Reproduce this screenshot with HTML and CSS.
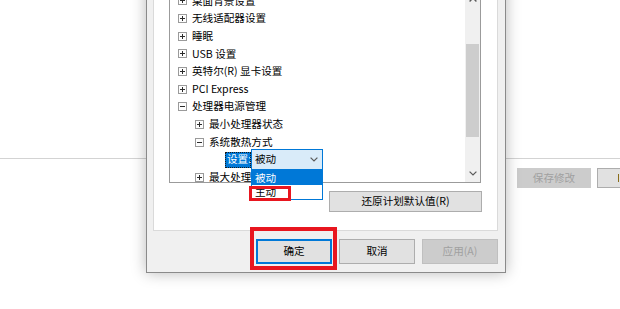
FILE: index.html
```html
<!DOCTYPE html>
<html lang="zh-CN">
<head>
<meta charset="utf-8">
<title>电源选项 - 高级设置</title>
<link rel="stylesheet" href="styles.css">
</head>
<body>
<svg class="defs" width="0" height="0" aria-hidden="true">
  <symbol id="plus" viewBox="0 0 9 9">
    <rect x="0.5" y="0.5" width="8" height="8" fill="#fdfdfd" stroke="#9a9a9a"/>
    <path d="M2 4.5h5M4.5 2v5" stroke="#2b2b2b" fill="none"/>
  </symbol>
  <symbol id="minus" viewBox="0 0 9 9">
    <rect x="0.5" y="0.5" width="8" height="8" fill="#fdfdfd" stroke="#9a9a9a"/>
    <path d="M2 4.5h5" stroke="#2b2b2b" fill="none"/>
  </symbol>
  <symbol id="chev-down" viewBox="0 0 8 5">
    <path d="M0.6 0.6L4 4L7.4 0.6" stroke="#5a5a5a" stroke-width="1.2" fill="none"/>
  </symbol>
  <symbol id="chev-up" viewBox="0 0 8 5">
    <path d="M0.6 4.4L4 1L7.4 4.4" stroke="#5a5a5a" stroke-width="1.4" fill="none"/>
  </symbol>
</svg>

<div class="page">
  <div class="page-band"></div>
  <div class="page-actions">
    <button class="pbtn pbtn-disabled">保存修改</button>
    <button class="pbtn pbtn-cut" aria-label="取消"><span class="cut-mark"></span></button>
  </div>
</div>

<div class="dialog">
  <div class="panel">
    <div class="tree">
      <ul class="tree-list">
        <li class="row l1"><svg class="exp"><use href="#plus"/></svg><span>桌面背景设置</span></li>
        <li class="row l1"><svg class="exp"><use href="#plus"/></svg><span>无线适配器设置</span></li>
        <li class="row l1"><svg class="exp"><use href="#plus"/></svg><span>睡眠</span></li>
        <li class="row l1"><svg class="exp"><use href="#plus"/></svg><span>USB 设置</span></li>
        <li class="row l1"><svg class="exp"><use href="#plus"/></svg><span>英特尔(R) 显卡设置</span></li>
        <li class="row l1"><svg class="exp"><use href="#plus"/></svg><span>PCI Express</span></li>
        <li class="row l1"><svg class="exp"><use href="#minus"/></svg><span>处理器电源管理</span></li>
        <li class="row l2"><svg class="exp"><use href="#plus"/></svg><span>最小处理器状态</span></li>
        <li class="row l2"><svg class="exp"><use href="#minus"/></svg><span>系统散热方式</span></li>
        <li class="row l3"><span class="combo-label">设置:</span><span class="combo"><span>被动</span><svg class="combo-chev"><use href="#chev-down"/></svg></span></li>
        <li class="row l2"><svg class="exp"><use href="#plus"/></svg><span>最大处理器状态</span></li>
      </ul>
      <div class="scrollbar">
        <div class="sb-btn"><svg class="sb-arrow"><use href="#chev-up"/></svg></div>
        <div class="sb-track"><div class="sb-thumb"></div></div>
        <div class="sb-btn"><svg class="sb-arrow"><use href="#chev-down"/></svg></div>
      </div>
    </div>
    <div class="restore-row">
      <button class="btn restore">还原计划默认值(R)</button>
    </div>
  </div>
  <div class="actions">
    <button class="btn btn-primary">确定</button>
    <button class="btn">取消</button>
    <button class="btn btn-disabled">应用(A)</button>
  </div>
  <ul class="combo-list">
    <li class="opt opt-sel">被动</li>
    <li class="opt">主动</li>
  </ul>
</div>

<div class="mark mark-option"></div>
<div class="mark mark-ok"></div>
</body>
</html>
```

FILE: styles.css
```css
* {
  box-sizing: border-box;
  margin: 0;
  padding: 0;
}

html,
body {
  width: 620px;
  height: 309px;
  overflow: hidden;
}

body {
  position: relative;
  background: #ffffff;
  color: #000000;
  font-family: "Noto Sans CJK SC", "Noto Sans", sans-serif;
  font-size: 10.6px;
  line-height: 1;
}

.defs {
  position: absolute;
  width: 0;
  height: 0;
}

/* background page */
.page-band {
  height: 159px;
  border-bottom: 1px solid #d3d3d3;
}

.page-actions {
  display: flex;
  gap: 6px;
  padding: 9px 0 0 517px;
  white-space: nowrap;
}

.pbtn {
  flex: none;
  width: 74px;
  height: 20px;
  border: 1px solid #adadad;
  background: #e1e1e1;
  color: #000;
  font: inherit;
}

.pbtn-disabled {
  background: #cccccc;
  border-color: #cccccc;
  color: #a0a0a0;
}

.pbtn-cut {
  display: flex;
  justify-content: flex-end;
  align-items: center;
  width: 23px;
  border-right-width: 0;
  padding-right: 1px;
}

.cut-mark {
  width: 1px;
  height: 8px;
  background: #8a6d1a;
}

/* dialog window */
.dialog {
  position: absolute;
  left: 146px;
  top: -30px;
  width: 360px;
  background: #f0f0f0;
  border: 1px solid #8a8a8a;
  padding: 0 7px 8px 6px;
  box-shadow: 0 0 14px rgba(0, 0, 0, 0.28);
}

.panel {
  margin-top: 10px;
  background: #ffffff;
  border: 1px solid #dadada;
  padding: 8px 0 18px 15px;
}

.tree {
  display: flex;
  width: 312px;
  height: 193px;
  border: 1px solid #9b9b9b;
  overflow: hidden;
  background: #fff;
}

.tree-list {
  flex: 1;
  list-style: none;
  padding-top: 1px;
  overflow: hidden;
}

.row {
  display: flex;
  align-items: center;
  gap: 5px;
  height: 17.67px;
  white-space: nowrap;
}

.l1 { padding-left: 8px; }
.l2 { padding-left: 25px; }
.l3 { padding-left: 55px; gap: 0; }

.exp {
  flex: none;
  width: 9px;
  height: 9px;
}

.combo-label {
  flex: none;
  display: flex;
  align-items: center;
  width: 26px;
  height: 16px;
  padding-left: 2px;
  background: #0078d7;
  color: #ffffff;
  outline: 1px dotted #1a1a1a;
  outline-offset: -1px;
}

.combo {
  flex: none;
  display: flex;
  align-items: center;
  justify-content: space-between;
  width: 72px;
  height: 21px;
  padding: 0 4px 0 3px;
  border: 1px solid #0078d7;
  background: #d9ebf9;
}

.combo-chev {
  width: 8px;
  height: 5px;
}

/* scrollbar */
.scrollbar {
  flex: none;
  display: flex;
  flex-direction: column;
  width: 15px;
  background: #f0f0f0;
}

.sb-btn {
  flex: none;
  display: flex;
  align-items: center;
  justify-content: center;
  height: 17px;
}

.sb-arrow {
  width: 8px;
  height: 5px;
}

.sb-track {
  flex: 1;
}

.sb-thumb {
  margin: 36px 1px 0 1px;
  height: 93px;
  background: #cdcdcd;
}

/* buttons */
.restore-row {
  display: flex;
  justify-content: flex-end;
  width: 313px;
  margin-top: 8px;
}

.btn {
  flex: none;
  height: 25px;
  width: 76px;
  border: 1px solid #adadad;
  background: #e1e1e1;
  color: #000;
  font: inherit;
}

.restore {
  width: 153px;
  height: 21px;
}

.actions {
  display: flex;
  justify-content: flex-end;
  gap: 7px;
  margin-top: 8px;
}

.btn-primary {
  border-color: #0078d7;
  box-shadow: inset 0 0 0 1px #0078d7;
}

.btn-disabled {
  background: #cccccc;
  border-color: #bfbfbf;
  color: #a0a0a0;
}

/* open dropdown list (overlay) */
.combo-list {
  position: absolute;
  left: 104px;
  top: 199px;
  width: 72px;
  list-style: none;
  background: #ffffff;
  border: 1px solid #0078d7;
}

.opt {
  height: 14px;
  line-height: 14px;
  padding-left: 3px;
}

.opt-sel {
  background: #0078d7;
  color: #ffffff;
}

/* red annotation boxes */
.mark {
  position: absolute;
  border: 3px solid #e8161f;
}

.mark-option {
  left: 249px;
  top: 186px;
  width: 42px;
  height: 15px;
}

.mark-ok {
  left: 250px;
  top: 227px;
  width: 87px;
  height: 43px;
  border-width: 4px;
}
```
